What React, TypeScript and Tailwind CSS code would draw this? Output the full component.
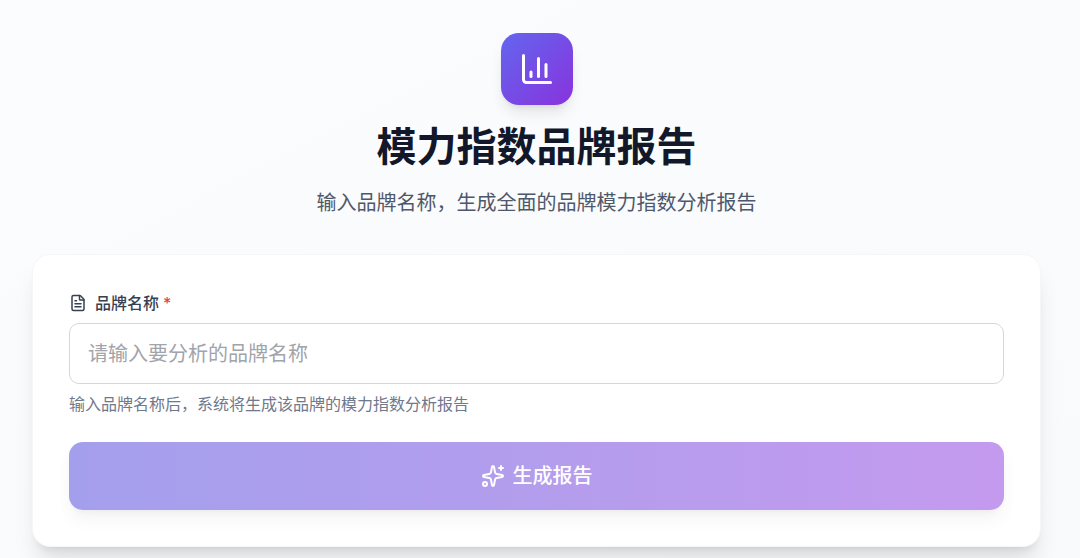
import { useState } from "react";
import { ChartColumn, FileText, Sparkles } from "lucide-react";

export default function App() {
  const [brand, setBrand] = useState("");

  return (
    <main className="min-h-screen bg-linear-to-br/srgb from-[#fbfcfd] to-slate-50 pt-[33px] pr-[39px] pb-3 pl-8 font-['Inter','Noto_Sans_CJK_SC',sans-serif]">
      <header className="flex flex-col items-center text-center">
        <div className="flex h-[72px] w-[72px] items-center justify-center rounded-[18px] bg-linear-to-br/srgb from-[#6366ee] to-[#8833dd] shadow-lg">
          <ChartColumn className="h-9 w-9 text-white" />
        </div>
        <h1 className="mt-4 text-[40px] leading-[52px] font-bold text-[#12172a]">模力指数品牌报告</h1>
        <p className="mt-[14px] text-xl leading-8 text-[#4f586b]">
          输入品牌名称，生成全面的品牌模力指数分析报告
        </p>
      </header>

      <form
        onSubmit={(e) => e.preventDefault()}
        className="mt-[35px] rounded-[18px] border border-[#f5f6f8] bg-white p-9 shadow-xl"
      >
        <label htmlFor="brand" className="flex items-center text-base font-medium text-[#373f52]">
          <FileText className="mr-2 h-[18px] w-[18px]" />
          品牌名称
          <span className="ml-1 text-[#dc4a48]">*</span>
        </label>
        <input
          id="brand"
          value={brand}
          onChange={(e) => setBrand(e.target.value)}
          placeholder="请输入要分析的品牌名称"
          className="mt-2 h-[61px] w-full rounded-[10px] border border-[#d3d8db] px-[18px] text-xl placeholder:text-[#a1a4ab]"
        />
        <p className="mt-2 text-base text-[#70788c]">输入品牌名称后，系统将生成该品牌的模力指数分析报告</p>
        <button
          type="submit"
          disabled={!brand.trim()}
          className="mt-[26px] flex h-[68px] w-full items-center justify-center gap-2 rounded-[14px] bg-linear-to-r/srgb from-[#4b42db] to-[#8a38df] text-xl font-medium text-white shadow-lg disabled:opacity-50"
        >
          <Sparkles className="h-6 w-6" />
          生成报告
        </button>
      </form>
    </main>
  );
}
